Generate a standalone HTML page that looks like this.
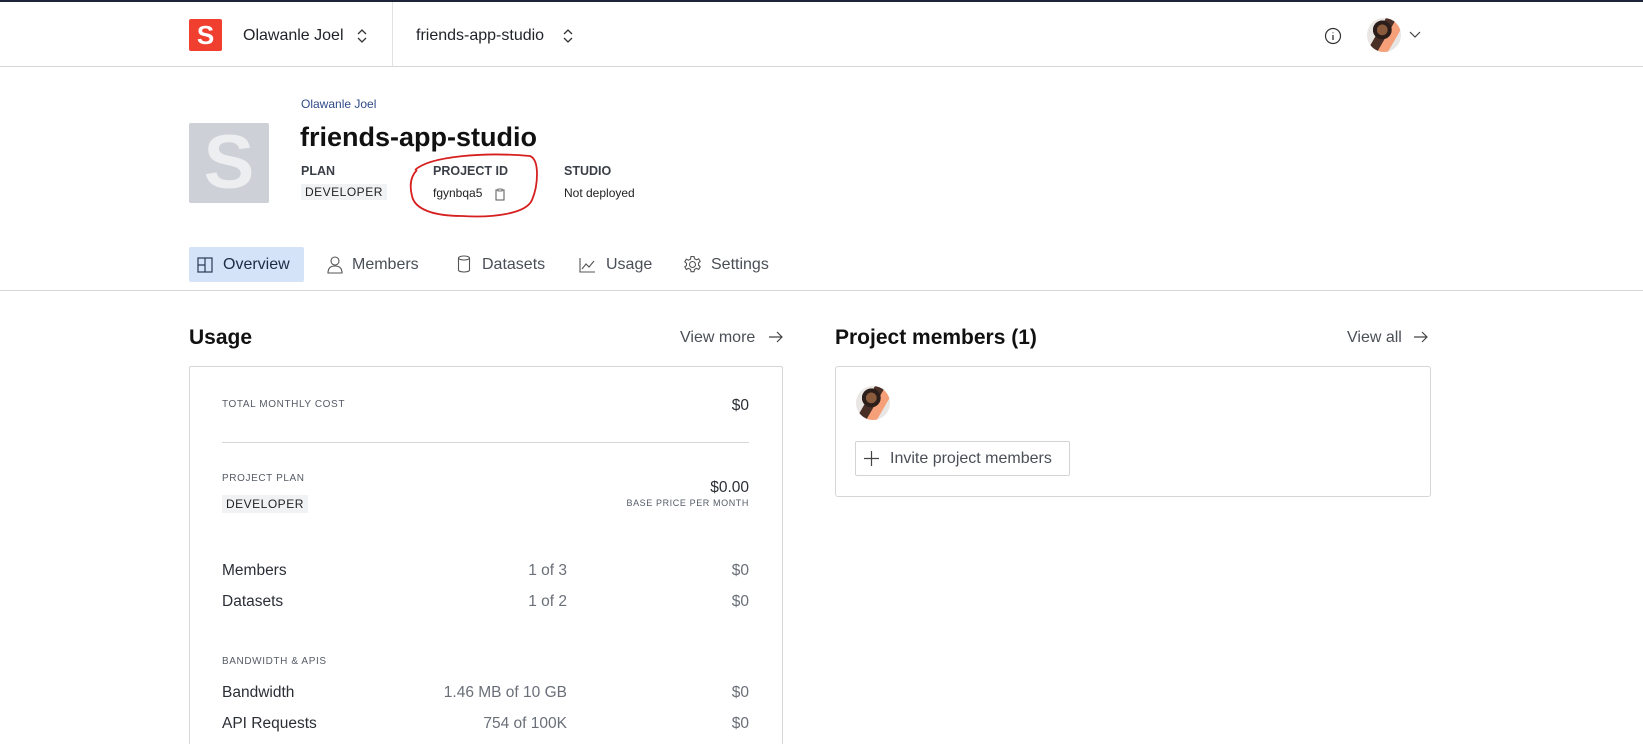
<!DOCTYPE html>
<html style="width:1643px;height:744px;overflow:hidden"><head><meta charset="utf-8"><style>
*{box-sizing:border-box;margin:0;padding:0}
body{width:1643px;height:744px;overflow:hidden;background:#fff;font-family:"Liberation Sans",Arial,sans-serif;color:#1f2328;position:relative}
.a{position:absolute;white-space:nowrap}
.lab{font-size:10px;letter-spacing:.6px;color:#555b66}
.row{font-size:15.5px;color:#2a2e35}
.mid{font-size:15.5px;color:#6a6f78;text-align:right}
.r{text-align:right}
.av{border-radius:50%;background:radial-gradient(circle at 45% 35%,#8a5a3c 0 18%,#2b1e1a 19% 32%,transparent 33%),linear-gradient(120deg,#e9e6e3 0 35%,#4a2f26 36% 55%,#f6a07a 56% 75%,#e8e6e4 76%)}
</style></head><body>
<div class="a" style="left:0;top:0;width:1643px;height:2px;background:#1e2438"></div>
<div class="a" style="left:0;top:66px;width:1643px;height:1px;background:#d8d8d8"></div>
<div class="a" style="left:392px;top:2px;width:1px;height:64px;background:#e2e2e2"></div>
<div class="a" style="left:189px;top:19px;width:33px;height:32px;background:#f03e2f;border-radius:2px;color:#fff;font-weight:bold;font-size:26px;text-align:center;line-height:32px">S</div>
<div class="a" style="left:243px;top:27px;font-size:16px;color:#1f2328">Olawanle Joel</div>
<svg class="a" style="left:356px;top:26px" width="12" height="20" viewBox="0 0 12 20"><path d="M2 8l4-4 4 4M2 12l4 4 4-4" fill="none" stroke="#333" stroke-width="1.3"/></svg>
<div class="a" style="left:416px;top:27px;font-size:16px;color:#1f2328">friends-app-studio</div>
<svg class="a" style="left:562px;top:26px" width="12" height="20" viewBox="0 0 12 20"><path d="M2 8l4-4 4 4M2 12l4 4 4-4" fill="none" stroke="#333" stroke-width="1.3"/></svg>
<svg class="a" style="left:1324px;top:27px" width="18" height="18" viewBox="0 0 18 18"><circle cx="9" cy="9" r="7.5" fill="none" stroke="#333" stroke-width="1.2"/><path d="M9 8v5M9 5.5v.8" stroke="#333" stroke-width="1.3"/></svg>
<div class="a av" style="left:1367px;top:18px;width:34px;height:34px"></div>
<svg class="a" style="left:1409px;top:31px" width="12" height="8" viewBox="0 0 12 8"><path d="M1 1l5 5 5-5" fill="none" stroke="#444" stroke-width="1.2"/></svg>

<div class="a" style="left:301px;top:97px;font-size:12px;color:#2f4a8a">Olawanle Joel</div>
<div class="a" style="left:189px;top:123px;width:80px;height:80px;background:#cdd0d6;border-radius:2px;color:#eceef0;font-weight:bold;font-size:76px;text-align:center;line-height:80px">S</div>
<div class="a" style="left:300px;top:122px;font-size:27px;font-weight:bold;color:#111">friends-app-studio</div>
<div class="a" style="left:301px;top:164px;font-size:12.5px;font-weight:bold;color:#3a3f47">PLAN</div>
<div class="a" style="left:301px;top:184px;font-size:12px;letter-spacing:.5px;background:#f1f2f3;padding:1px 4px;color:#222">DEVELOPER</div>
<div class="a" style="left:433px;top:164px;font-size:12.5px;font-weight:bold;color:#3a3f47">PROJECT ID</div>
<div class="a" style="left:433px;top:186px;font-size:12px;color:#222">fgynbqa5</div>
<svg class="a" style="left:495px;top:188px" width="10" height="13" viewBox="0 0 10 13"><rect x="1" y="2" width="8" height="10" fill="none" stroke="#555" stroke-width="1"/><rect x="3" y="1" width="4" height="2" fill="#fff" stroke="#555" stroke-width=".8"/></svg>
<div class="a" style="left:564px;top:164px;font-size:12.5px;font-weight:bold;color:#3a3f47">STUDIO</div>
<div class="a" style="left:564px;top:186px;font-size:12px;color:#222">Not deployed</div>
<svg class="a" style="left:405px;top:150px" width="140" height="70" viewBox="0 0 140 70"><path d="M10 20C25 6 80 2 125 6c10 4 8 30 2 44-6 14-40 18-70 16C30 66 10 60 7 46 4 34 6 26 12 20" fill="none" stroke="#d62020" stroke-width="1.8"/></svg>

<div class="a" style="left:189px;top:247px;width:115px;height:35px;background:#d5e3f8;border-radius:2px"></div>
<svg class="a" style="left:197px;top:257px" width="16" height="16" viewBox="0 0 16 16"><rect x="1" y="1" width="14" height="14" fill="none" stroke="#2b3a55" stroke-width="1.2"/><path d="M8 1v14M1 8h7" stroke="#2b3a55" stroke-width="1.2"/></svg>
<div class="a" style="left:223px;top:256px;font-size:16px;color:#1e2b45">Overview</div>
<svg class="a" style="left:326px;top:255px" width="18" height="19" viewBox="0 0 18 19"><circle cx="9" cy="6" r="4" fill="none" stroke="#555" stroke-width="1.1"/><path d="M2 18c0-5 3-7 7-7s7 2 7 7z" fill="none" stroke="#555" stroke-width="1.1"/></svg>
<div class="a" style="left:352px;top:256px;font-size:16px;color:#4a4f57">Members</div>
<svg class="a" style="left:457px;top:255px" width="14" height="18" viewBox="0 0 14 18"><ellipse cx="7" cy="3" rx="5.5" ry="2" fill="none" stroke="#555" stroke-width="1.1"/><path d="M1.5 3v12c0 1.2 2.5 2 5.5 2s5.5-.8 5.5-2V3" fill="none" stroke="#555" stroke-width="1.1"/></svg>
<div class="a" style="left:482px;top:256px;font-size:16px;color:#4a4f57">Datasets</div>
<svg class="a" style="left:579px;top:257px" width="17" height="16" viewBox="0 0 17 16"><path d="M1 1v14h15M3 12l4-5 3 3 5-6" fill="none" stroke="#555" stroke-width="1.1"/></svg>
<div class="a" style="left:606px;top:256px;font-size:16px;color:#4a4f57">Usage</div>
<svg class="a" style="left:683px;top:255px" width="19" height="19" viewBox="0 0 19 19"><circle cx="9.5" cy="9.5" r="3" fill="none" stroke="#555" stroke-width="1.1"/><path d="M8 1.5h3l.5 2.3 2 1 2.2-1 1.5 2.6-1.7 1.6v2.2l1.7 1.6-1.5 2.6-2.2-1-2 1-.5 2.3H8l-.5-2.3-2-1-2.2 1-1.5-2.6L3.5 10.6V8.4L1.8 6.8l1.5-2.6 2.2 1 2-1z" fill="none" stroke="#555" stroke-width="1.1"/></svg>
<div class="a" style="left:711px;top:256px;font-size:16px;color:#4a4f57">Settings</div>
<div class="a" style="left:0;top:290px;width:1643px;height:1px;background:#d8d8d8"></div>

<div class="a" style="left:189px;top:326px;font-size:21px;font-weight:bold;color:#111">Usage</div>
<div class="a" style="left:680px;top:329px;font-size:16px;color:#4a4f57">View more</div>
<svg class="a" style="left:768px;top:330px" width="16" height="14" viewBox="0 0 16 14"><path d="M1 7h13M9 2l5 5-5 5" fill="none" stroke="#444" stroke-width="1.2"/></svg>
<div class="a" style="left:189px;top:366px;width:594px;height:378px;border:1px solid #d6d6d6;border-bottom:none;border-radius:2px 2px 0 0"></div>
<div class="a lab" style="left:222px;top:399px">TOTAL MONTHLY COST</div>
<div class="a row r" style="left:680px;width:69px;top:397px">$0</div>
<div class="a" style="left:222px;top:442px;width:527px;height:1px;background:#d6d6d6"></div>
<div class="a lab" style="left:222px;top:473px">PROJECT PLAN</div>
<div class="a" style="left:222px;top:495px;font-size:12px;letter-spacing:.5px;background:#f1f2f3;padding:2px 4px;color:#222">DEVELOPER</div>
<div class="a row r" style="left:640px;width:109px;top:479px">$0.00</div>
<div class="a lab r" style="left:560px;width:189px;top:498px;font-size:9px">BASE PRICE PER MONTH</div>
<div class="a row" style="left:222px;top:562px">Members</div>
<div class="a mid" style="left:450px;width:117px;top:562px">1 of 3</div>
<div class="a mid" style="left:680px;width:69px;top:562px">$0</div>
<div class="a row" style="left:222px;top:593px">Datasets</div>
<div class="a mid" style="left:450px;width:117px;top:593px">1 of 2</div>
<div class="a mid" style="left:680px;width:69px;top:593px">$0</div>
<div class="a lab" style="left:222px;top:656px">BANDWIDTH &amp; APIS</div>
<div class="a row" style="left:222px;top:684px">Bandwidth</div>
<div class="a mid" style="left:400px;width:167px;top:684px">1.46 MB of 10 GB</div>
<div class="a mid" style="left:680px;width:69px;top:684px">$0</div>
<div class="a row" style="left:222px;top:715px">API Requests</div>
<div class="a mid" style="left:400px;width:167px;top:715px">754 of 100K</div>
<div class="a mid" style="left:680px;width:69px;top:715px">$0</div>

<div class="a" style="left:835px;top:326px;font-size:21px;font-weight:bold;color:#111">Project members (1)</div>
<div class="a" style="left:1347px;top:329px;font-size:16px;color:#4a4f57">View all</div>
<svg class="a" style="left:1413px;top:330px" width="16" height="14" viewBox="0 0 16 14"><path d="M1 7h13M9 2l5 5-5 5" fill="none" stroke="#444" stroke-width="1.2"/></svg>
<div class="a" style="left:835px;top:366px;width:596px;height:131px;border:1px solid #d6d6d6;border-radius:3px"></div>
<div class="a av" style="left:856px;top:386px;width:34px;height:34px"></div>
<div class="a" style="left:855px;top:441px;width:215px;height:35px;border:1px solid #d3d3d3;border-radius:2px"></div>
<svg class="a" style="left:864px;top:451px" width="15" height="15" viewBox="0 0 15 15"><path d="M7.5 0v15M0 7.5h15" stroke="#444" stroke-width="1.2"/></svg>
<div class="a" style="left:890px;top:450px;font-size:16px;color:#4a4f57">Invite project members</div>
</body></html>
